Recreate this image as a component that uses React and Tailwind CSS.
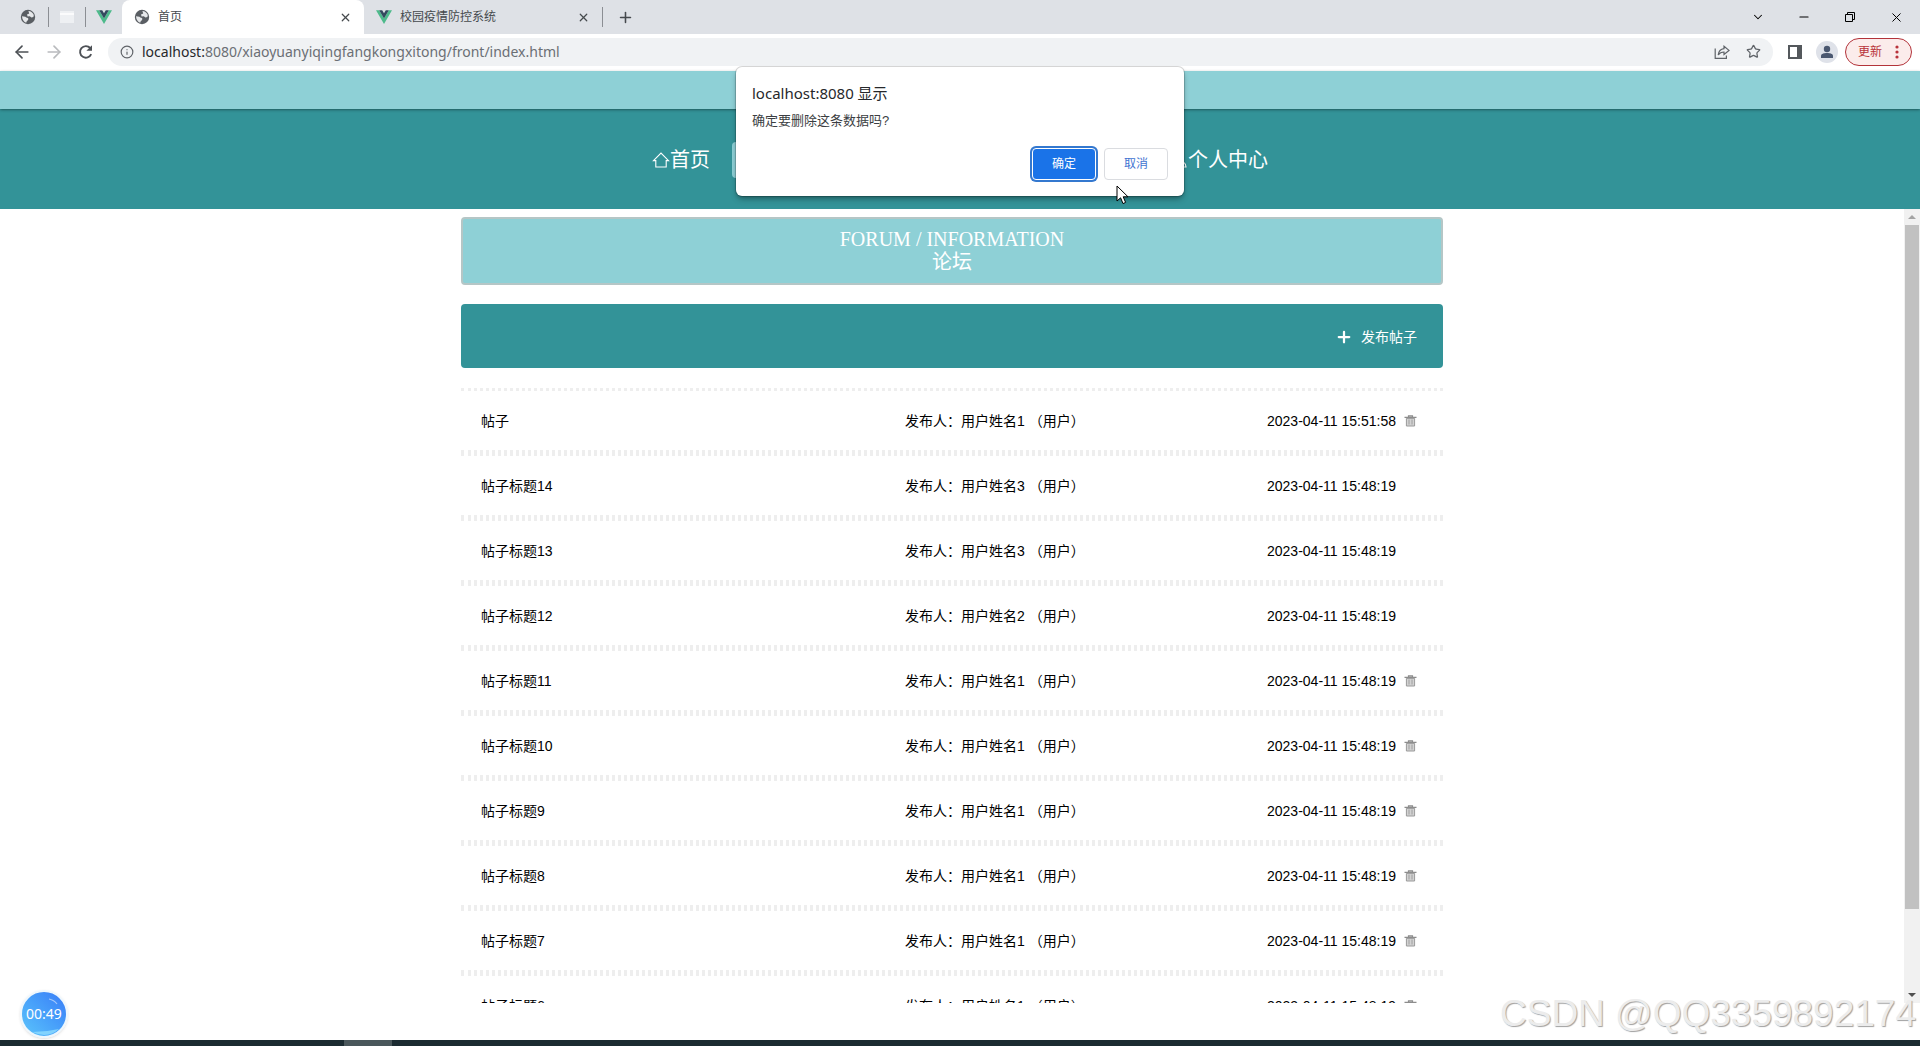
import { useState } from "react";
import { ArrowLeft, ArrowRight, ChevronDown, Info, Minus, Plus, Star, X } from "lucide-react";

const POSTS = [
  { title: "帖子", user: "用户姓名1", time: "2023-04-11 15:51:58", own: true },
  { title: "帖子标题14", user: "用户姓名3", time: "2023-04-11 15:48:19", own: false },
  { title: "帖子标题13", user: "用户姓名3", time: "2023-04-11 15:48:19", own: false },
  { title: "帖子标题12", user: "用户姓名2", time: "2023-04-11 15:48:19", own: false },
  { title: "帖子标题11", user: "用户姓名1", time: "2023-04-11 15:48:19", own: true },
  { title: "帖子标题10", user: "用户姓名1", time: "2023-04-11 15:48:19", own: true },
  { title: "帖子标题9", user: "用户姓名1", time: "2023-04-11 15:48:19", own: true },
  { title: "帖子标题8", user: "用户姓名1", time: "2023-04-11 15:48:19", own: true },
  { title: "帖子标题7", user: "用户姓名1", time: "2023-04-11 15:48:19", own: true },
  { title: "帖子标题6", user: "用户姓名1", time: "2023-04-11 15:48:19", own: true },
];

function GlobeIcon() {
  return (
    <svg className="h-4 w-4 shrink-0" viewBox="0 0 16 16">
      <circle cx="8" cy="8" r="7.2" fill="#5a5e63" />
      <path
        d="M8.4 2 C10.8 2.2 13 3.6 13.8 6 L13.4 8 L11.4 8.6 L9.8 7.2 L7.6 7.4 L7 5.6 L9.2 4.6 Z M2 7.2 L5.4 7.8 C6.4 9 8.4 8.8 8.4 10 C8.2 11.6 6.4 11.6 6.2 13.8 C4 13 2.2 10.8 2 7.2 Z"
        fill="#e6e8ea"
      />
    </svg>
  );
}

function VueIcon() {
  return (
    <svg className="h-4 w-4 shrink-0" viewBox="0 0 16 16">
      <path d="M0 1.2 H3.2 L8 9.4 L12.8 1.2 H16 L8 15 Z" fill="#4dba8b" />
      <path d="M3.2 1.2 H6.2 L8 4.3 L9.8 1.2 H12.8 L8 9.4 Z" fill="#34495e" />
    </svg>
  );
}

function ReloadIcon() {
  return (
    <svg className="h-4 w-4" viewBox="0 0 16 16">
      <path d="M13.2 10.2 A5.8 5.8 0 1 1 12.2 4" fill="none" stroke="#4d5156" strokeWidth="1.9" />
      <path d="M14 1.2 V6.8 H8.4 Z" fill="#4d5156" />
    </svg>
  );
}

function ShareIcon() {
  return (
    <svg className="h-4 w-4" viewBox="0 0 16 16" fill="none" stroke="#5f6368" strokeWidth="1.2">
      <path d="M1.2 4.5 V14.3 H12.4 V11.5" />
      <path d="M10 2.2 L15 6.4 L10 10.4 V8 C7.4 8 5.6 9 4.2 11 C4.6 7.6 6.4 5 10 4.6 Z" />
    </svg>
  );
}

function TrashIcon() {
  return (
    <svg className="h-3 w-[13px]" viewBox="0 0 13 12">
      <path d="M0.5 2.4 H12.5 M4.5 2.2 V0.8 H8.5 V2.2" fill="none" stroke="#8c8c8c" strokeWidth="1.2" />
      <path d="M2.4 3.4 H10.6 V11 H2.4 Z" fill="#d2d2d2" stroke="#9a9a9a" strokeWidth="1" />
      <path d="M5 4.5 V9.5 M8 4.5 V9.5" stroke="#9a9a9a" strokeWidth="0.9" />
    </svg>
  );
}

function TabStrip() {
  return (
    <div className="flex h-[34px] items-center bg-[#dee1e6] text-xs text-[#45494d]">
      <div className="flex items-center pl-5">
        <GlobeIcon />
        <span className="ml-3 h-5 w-px bg-[#8b8e93]" />
        <svg className="ml-[10px] h-4 w-4" viewBox="0 0 16 16">
          <path d="M1 2 H15 V14 H1 Z" fill="#eef0f3" />
          <path d="M1 5 H15" stroke="#fff" strokeWidth="1.5" />
        </svg>
        <span className="mx-[10px] h-5 w-px bg-[#8b8e93]" />
        <VueIcon />
      </div>
      <div className="ml-[10px] flex h-full w-[242px] items-center rounded-t-lg bg-white pl-3 pr-2">
        <GlobeIcon />
        <span className="ml-2 flex-1">首页</span>
        <button aria-label="关闭标签页" className="p-1">
          <X size={13} strokeWidth={2.2} />
        </button>
      </div>
      <div className="flex h-full w-[238px] items-center pl-3 pr-2">
        <VueIcon />
        <span className="ml-2 flex-1">校园疫情防控系统</span>
        <button aria-label="关闭标签页" className="p-1">
          <X size={13} strokeWidth={2.2} />
        </button>
      </div>
      <span className="h-5 w-px bg-[#8b8e93]" />
      <button aria-label="新标签页" className="ml-[14px]">
        <Plus size={17} strokeWidth={2.2} />
      </button>
      <div className="ml-auto flex h-7 items-center gap-8 pr-4 text-black">
        <button aria-label="搜索标签页">
          <ChevronDown size={14} strokeWidth={1.8} />
        </button>
        <button aria-label="最小化">
          <Minus size={14} strokeWidth={1.8} />
        </button>
        <button aria-label="还原">
          <svg className="h-[14px] w-[14px]" viewBox="0 0 14 14" fill="none" stroke="#000">
            <path d="M2.5 4.5 H9.5 V11.5 H2.5 Z M4.5 4.5 V2.5 H11.5 V9.5 H9.5" />
          </svg>
        </button>
        <button aria-label="关闭">
          <X size={15} strokeWidth={1.6} />
        </button>
      </div>
    </div>
  );
}

function Toolbar() {
  return (
    <div className="flex h-[37px] items-center bg-white pb-[2px] pl-3 pr-2">
      <button aria-label="后退" className="text-[#4d5156]">
        <ArrowLeft size={20} />
      </button>
      <button aria-label="前进" className="ml-3 text-[#b9bbbe]">
        <ArrowRight size={20} />
      </button>
      <button aria-label="重新加载" className="ml-[14px]">
        <ReloadIcon />
      </button>
      <div className="ml-[14px] flex h-7 flex-1 items-center rounded-full bg-[#f0f2f4] px-3">
        <Info size={14} className="text-[#5f6368]" />
        <div className="ml-2 flex-1 font-['Noto_Sans'] text-sm text-[#6b6f74]">
          <span className="text-[#26282b]">localhost:</span>8080/xiaoyuanyiqingfangkongxitong/front/index.html
        </div>
        <button aria-label="分享">
          <ShareIcon />
        </button>
        <button aria-label="收藏" className="ml-4 text-[#5f6368]">
          <Star size={15} />
        </button>
      </div>
      <button aria-label="侧边栏" className="ml-[14px]">
        <svg className="h-4 w-4" viewBox="0 0 16 16">
          <path d="M2 2 H14 V14 H2 Z" fill="none" stroke="#54585c" strokeWidth="2" />
          <path d="M10 2 H14 V14 H10 Z" fill="#54585c" />
        </svg>
      </button>
      <button aria-label="用户" className="ml-3">
        <svg className="h-6 w-6" viewBox="0 0 24 24">
          <circle cx="12" cy="12" r="11" fill="#dfe2e9" />
          <circle cx="12" cy="9" r="3.2" fill="#4b5870" />
          <path d="M6 18 V16 C6 13.8 9 13 12 13 C15 13 18 13.8 18 16 V18 Z" fill="#4b5870" />
        </svg>
      </button>
      <button className="ml-[6px] flex h-7 w-[67px] items-center justify-between rounded-full border border-[#b3333a] bg-[#fbeceb] px-3 text-xs text-[#b8323a]">
        更新
        <svg className="h-4 w-1" viewBox="0 0 4 16" fill="#b8323a">
          <circle cx="2" cy="3" r="1.6" />
          <circle cx="2" cy="8" r="1.6" />
          <circle cx="2" cy="13" r="1.6" />
        </svg>
      </button>
    </div>
  );
}

function SiteNav() {
  return (
    <header>
      <div className="relative h-[38px] bg-[#8ed0d6] shadow shadow-black/30" />
      <nav className="flex h-[100px] items-center justify-center bg-[#339398] pt-[2px] text-xl text-white">
        <div className="flex w-[632px] justify-between">
          <div className="flex gap-[14px]">
            <a href="#home" className="flex h-9 items-center px-2">
              <svg className="h-[18px] w-[18px]" viewBox="0 0 18 18" fill="none" stroke="#fff" strokeWidth="1.1">
                <path d="M1.5 9.6 L9 2 L16.5 9.6 H14.2 V16 H3.8 V9.6 Z" />
              </svg>
              首页
            </a>
            <a href="#forum" className="flex h-9 w-20 items-center justify-center rounded bg-[#8ed0d6]">
              论坛
            </a>
          </div>
          <a href="#center" className="flex h-9 items-center px-2">
            <svg className="h-[18px] w-[18px]" viewBox="0 0 18 18" fill="none" stroke="#fff" strokeWidth="1.1">
              <circle cx="9" cy="6" r="4" />
              <path d="M2 16 C2 8 16 8 16 16 Z" />
            </svg>
            个人中心
          </a>
        </div>
      </nav>
    </header>
  );
}

function PostTable({ posts }) {
  return (
    <table className="mt-5 block">
      <tbody className="block">
        {posts.map((post) => (
          <tr
            key={post.title}
            className="grid h-[65px] grid-cols-[424px_1fr_157px] items-center border-y-[3px] border-dotted border-[#eeeeee] pl-5 pr-[19px] text-sm text-black"
          >
            <td>{post.title}</td>
            <td>
              发布人：{post.user} （用户）
            </td>
            <td className="flex items-center gap-2">
              <span className="whitespace-nowrap">{post.time}</span>
              {post.own && (
                <button aria-label="删除">
                  <TrashIcon />
                </button>
              )}
            </td>
          </tr>
        ))}
      </tbody>
    </table>
  );
}

function ScrollBar() {
  return (
    <div className="flex w-4 flex-col items-center bg-[#f1f1f1]">
      <svg className="h-4 w-4 shrink-0" viewBox="0 0 16 16">
        <path d="M4 10 L8 6 L12 10 Z" fill="#a3a3a3" />
      </svg>
      <div className="h-[684px] w-[14px] bg-[#c1c1c1]" />
      <svg className="mt-auto h-4 w-4 shrink-0" viewBox="0 0 16 16">
        <path d="M4 6 L8 10 L12 6 Z" fill="#505050" />
      </svg>
    </div>
  );
}

function ConfirmDialog({ onClose }) {
  return (
    <div
      role="dialog"
      aria-label="localhost:8080 显示"
      className="absolute left-1/2 top-[67px] w-[448px] -translate-x-1/2 rounded-md bg-white px-4 pb-4 pt-[14px] shadow-md ring-1 shadow-black/30 ring-black/15"
    >
      <h2 className="font-['Noto_Sans','Noto_Sans_CJK_SC',sans-serif] text-[15px] leading-6 text-[#26282b]">
        localhost:8080 显示
      </h2>
      <p className="mt-1 text-[13px] leading-6 text-[#3b3e42]">确定要删除这条数据吗?</p>
      <div className="mt-[15px] flex justify-end gap-2 text-xs">
        <button
          onClick={onClose}
          className="h-8 w-16 rounded border border-white bg-[#1a73e8] text-white ring-2 ring-[#3478cf]"
        >
          确定
        </button>
        <button onClick={onClose} className="h-8 w-16 rounded border border-[#dadce0] text-[#3f74d1]">
          取消
        </button>
      </div>
    </div>
  );
}

export default function App() {
  const [confirming, setConfirming] = useState(true);

  return (
    <div className="relative flex h-screen flex-col overflow-hidden bg-white font-['Liberation_Sans','Noto_Sans_CJK_SC',sans-serif]">
      <TabStrip />
      <Toolbar />
      <SiteNav />
      <div className="mb-[37px] flex min-h-0 flex-1">
        <main className="min-h-0 flex-1 overflow-hidden pt-2">
          <div className="mx-auto max-w-[982px]">
            <div className="h-[68px] rounded border-2 border-[#b5c6c6] bg-[#8ed0d6] pt-[9px] text-center font-['Liberation_Serif','Noto_Sans_CJK_SC',serif] text-xl leading-[23px] text-white">
              <h1>FORUM / INFORMATION</h1>
              <p>论坛</p>
            </div>
            <div className="mt-[19px] flex h-16 items-center justify-end rounded bg-[#339398] pr-[26px] pt-[2px] text-sm text-white">
              <button className="flex items-center gap-2">
                <Plus size={18} strokeWidth={3} />
                发布帖子
              </button>
            </div>
            <PostTable posts={POSTS} />
          </div>
        </main>
        <ScrollBar />
      </div>
      <div className="h-[6px] shrink-0 bg-[#1b2b31]">
        <div className="ml-[344px] h-full w-12 bg-[#4a575b]" />
      </div>

      {confirming && <ConfirmDialog onClose={() => setConfirming(false)} />}

      <svg className="pointer-events-none absolute left-[1116px] top-[185px] h-5 w-[14px]" viewBox="0 0 14 20">
        <path d="M1 1 V16 L4.6 12.8 L7 18.6 L9.6 17.4 L7.2 11.8 H12 Z" fill="#fff" stroke="#000" />
      </svg>

      <div className="absolute bottom-2 left-5 flex h-12 w-12 items-center justify-center rounded-full border-2 border-[#eef7fd] bg-linear-to-tr from-[#5cc4fb] to-[#3a7bf7] font-['Noto_Sans',sans-serif] text-sm text-white shadow">
        <svg className="absolute inset-0 h-full w-full" viewBox="0 0 44 44" fill="none">
          <path d="M27 7 Q32 8 35 12" stroke="#fff" strokeOpacity="0.5" strokeWidth="1.2" />
          <path d="M10 40 Q24 40 37 37 Q26 47 10 40 Z" fill="#8fdcff" fillOpacity="0.8" />
        </svg>
        <span className="relative">00:49</span>
      </div>
      <div className="pointer-events-none absolute bottom-3 right-1 text-[37px] leading-10 text-[#ececec] [text-shadow:1px_1px_1px_#a0a0a0]">
        CSDN @QQ3359892174
      </div>
    </div>
  );
}
